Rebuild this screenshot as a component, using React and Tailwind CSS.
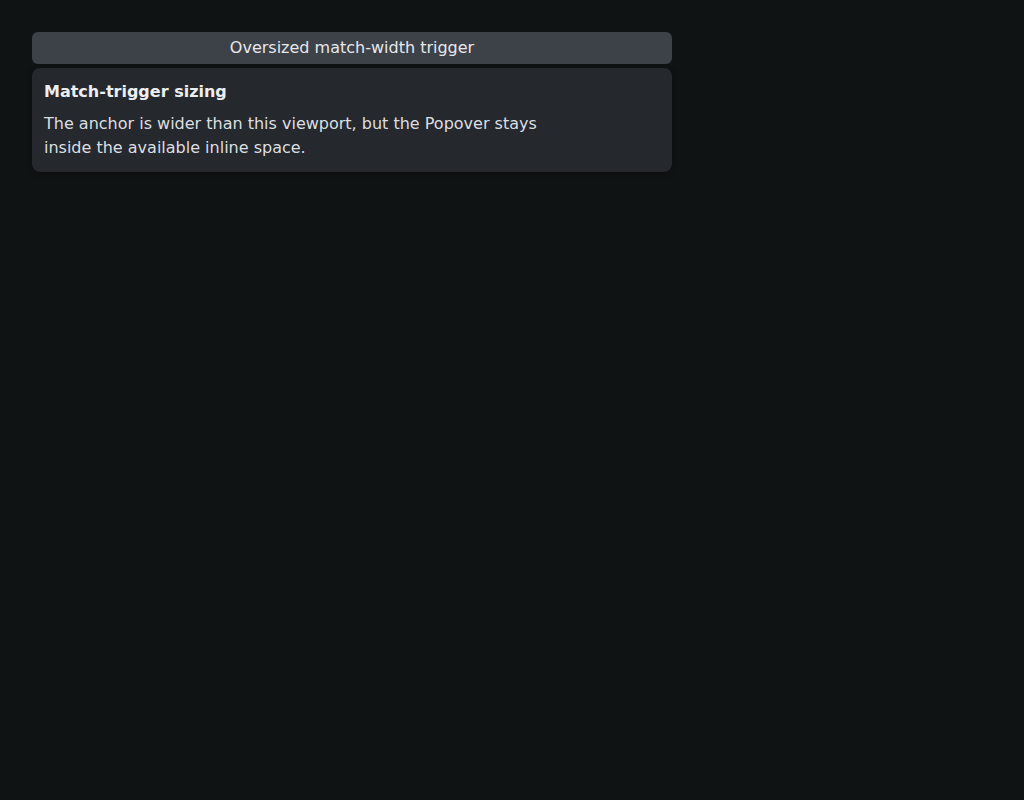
export default function App() {
  return (
    <div className="min-h-screen bg-[#101314] p-8 text-[#e6e8ea] font-['DejaVu_Sans',sans-serif]">
      <div className="flex w-[640px] flex-col gap-1">
        <button className="h-8 w-full rounded-md bg-[#3d4148] text-base text-[#e6e8ec]">
          Oversized match-width trigger
        </button>
        <div className="rounded-lg bg-[#25282c] p-3 shadow-[0_2px_6px_rgba(0,0,0,0.35)]">
          <h2 className="text-base font-bold leading-6 text-[#eceef0]">Match-trigger sizing</h2>
          <p className="mt-2 max-w-lg text-base leading-6 text-[#dcdfe2]">
            The anchor is wider than this viewport, but the Popover stays inside the available inline space.
          </p>
        </div>
      </div>
    </div>
  );
}
